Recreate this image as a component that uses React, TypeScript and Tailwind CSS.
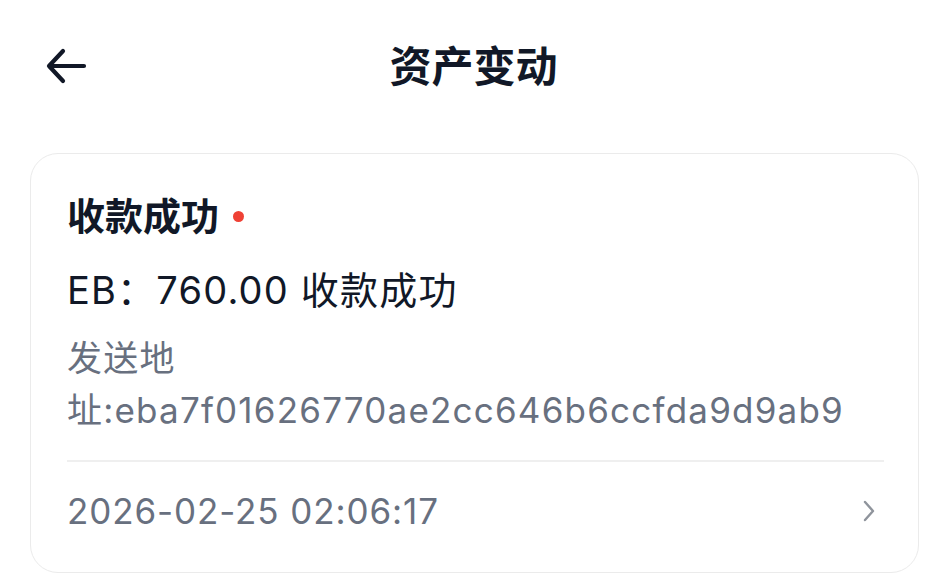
import React from "react";

export default function App() {
  const font = { fontFamily: 'Inter, "Noto Sans CJK SC", sans-serif' };
  return (
    <div className="w-[947px] h-[581px] bg-white overflow-hidden" style={font}>
      <div className="relative h-[134px] flex items-center justify-center px-[30px]">
        <svg
          className="absolute left-[45px] top-[48px]"
          width="42"
          height="36"
          viewBox="0 0 42 36"
          fill="none"
          stroke="#111827"
          strokeWidth="4.2"
          strokeLinecap="round"
          strokeLinejoin="round"
        >
          <path d="M39 18H4M18 3L4 18l14 15" />
        </svg>
        <div className="text-[42px] font-bold text-[#111827] leading-none">资产变动</div>
      </div>
      <div className="ml-[30px] mr-[28px] mt-[19px] border border-[#ebebeb] rounded-[28px] pl-[36px] pr-[34px] pt-[38px]">
        <div className="flex items-center gap-[14px]">
          <span className="text-[38px] font-bold text-[#111827] leading-[48px]">收款成功</span>
          <span className="w-[11px] h-[11px] rounded-full bg-[#ef4135]" />
        </div>
        <div className="mt-[26px] text-[38px] tracking-[1.2px] text-[#111827] leading-[48px]">EB：760.00 收款成功</div>
        <div className="mt-[18px] text-[35px] tracking-[1.2px] text-[#68707f] leading-[52px] break-words">
          发送地址:eba7f01626770ae2cc646b6ccfda9d9ab9
        </div>
        <div className="mt-[24px] h-[2px] bg-[#efefef]" />
        <div className="flex items-center justify-between h-[110px] pb-[12px]">
          <span className="text-[35px] tracking-[0.9px] text-[#68707f] leading-none">2026-02-25 02:06:17</span>
          <svg width="14" height="22" viewBox="0 0 14 22" fill="none" stroke="#8f949c" strokeWidth="2.4" strokeLinecap="round" strokeLinejoin="round" className="mr-[8px]">
            <path d="M3 2l8 9-8 9" />
          </svg>
        </div>
      </div>
    </div>
  );
}
